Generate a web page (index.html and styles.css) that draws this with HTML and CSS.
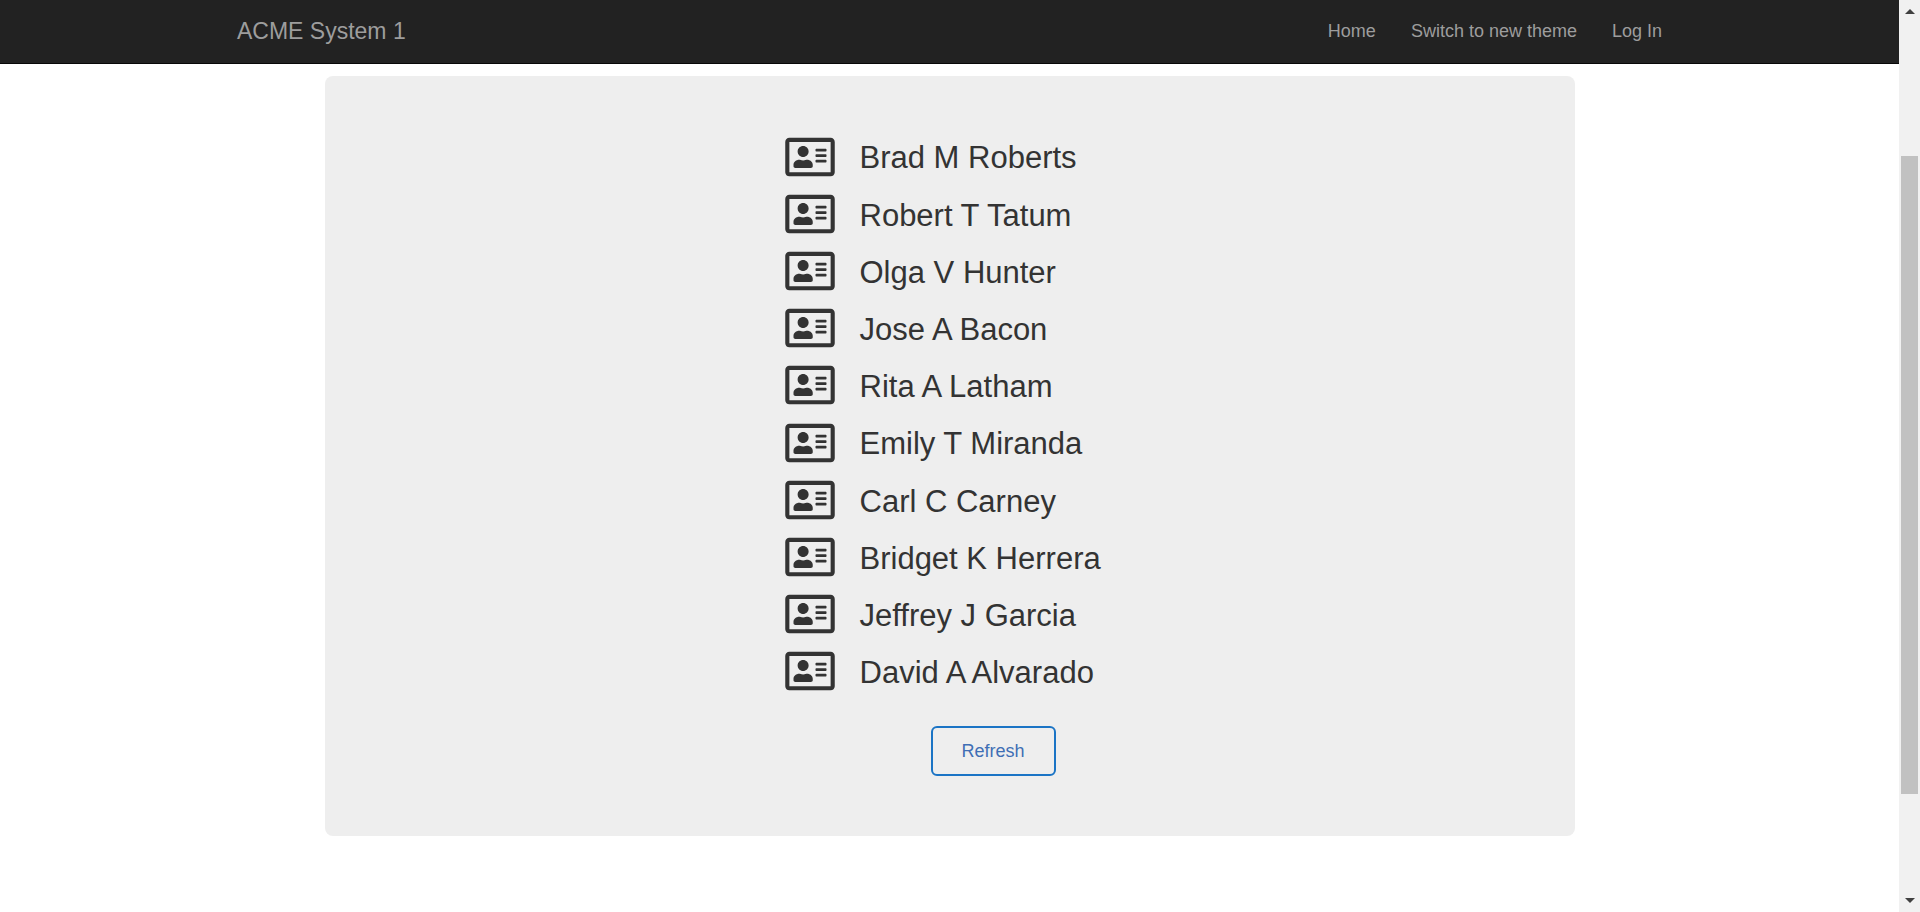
FILE: index.html
```html
<!DOCTYPE html>
<html lang="en">
<head>
<meta charset="utf-8">
<title>ACME System 1</title>
<link rel="stylesheet" href="styles.css">
</head>
<body>
<svg class="symbols" aria-hidden="true">
  <symbol id="address-card" viewBox="0 0 576 512">
    <path d="M528 32H48C21.500 32 0 53.500 0 80v352c0 26.500 21.500 48 48 48h480c26.500 0 48-21.500 48-48V80c0-26.500-21.500-48-48-48zm0 400H48V80h480v352zM208 256c35.300 0 64-28.700 64-64s-28.700-64-64-64-64 28.700-64 64 28.700 64 64 64zm-89.600 128h179.200c12.400 0 22.400-8.600 22.400-19.200v-19.200c0-31.800-30.100-57.600-67.200-57.600-10.800 0-18.700 8-44.800 8-26.900 0-33.400-8-44.800-8-37.100 0-67.200 25.800-67.200 57.600v19.200c0 10.600 10 19.200 22.400 19.200zM360 320h112c4.400 0 8-3.600 8-8v-16c0-4.400-3.600-8-8-8H360c-4.400 0-8 3.600-8 8v16c0 4.400 3.600 8 8 8zm0-64h112c4.400 0 8-3.600 8-8v-16c0-4.400-3.600-8-8-8H360c-4.400 0-8 3.600-8 8v16c0 4.400 3.600 8 8 8zm0-64h112c4.400 0 8-3.600 8-8v-16c0-4.400-3.600-8-8-8H360c-4.400 0-8 3.600-8 8v16c0 4.400 3.600 8 8 8z"/>
  </symbol>
</svg>
<div class="window">
  <div class="page">
    <header class="navbar">
      <div class="navbar-inner">
        <a class="brand" href="#">ACME System 1</a>
        <nav class="nav">
          <a href="#">Home</a>
          <a href="#">Switch to new theme</a>
          <a href="#">Log In</a>
        </nav>
      </div>
    </header>
    <main class="panel">
      <div class="directory">
        <ul class="people">
          <li><svg class="icon"><use href="#address-card"/></svg><span class="name">Brad M Roberts</span></li>
          <li><svg class="icon"><use href="#address-card"/></svg><span class="name">Robert T Tatum</span></li>
          <li><svg class="icon"><use href="#address-card"/></svg><span class="name">Olga V Hunter</span></li>
          <li><svg class="icon"><use href="#address-card"/></svg><span class="name">Jose A Bacon</span></li>
          <li><svg class="icon"><use href="#address-card"/></svg><span class="name">Rita A Latham</span></li>
          <li><svg class="icon"><use href="#address-card"/></svg><span class="name">Emily T Miranda</span></li>
          <li><svg class="icon"><use href="#address-card"/></svg><span class="name">Carl C Carney</span></li>
          <li><svg class="icon"><use href="#address-card"/></svg><span class="name">Bridget K Herrera</span></li>
          <li><svg class="icon"><use href="#address-card"/></svg><span class="name">Jeffrey J Garcia</span></li>
          <li><svg class="icon"><use href="#address-card"/></svg><span class="name">David A Alvarado</span></li>
        </ul>
        <button class="refresh" type="button">Refresh</button>
      </div>
    </main>
  </div>
  <div class="scrollbar" aria-hidden="true">
    <svg class="arrow" viewBox="0 0 10 5"><path d="M0 5L5 0L10 5Z"/></svg>
    <div class="track"><div class="thumb"></div></div>
    <svg class="arrow" viewBox="0 0 10 5"><path d="M0 0L5 5L10 0Z"/></svg>
  </div>
</div>
</body>
</html>
```
FILE: styles.css
```css
* {
  box-sizing: border-box;
}

body {
  margin: 0;
  background: #fff;
  color: #333;
  font: 18px/25px "Liberation Sans", Arial, sans-serif;
}

.symbols {
  display: none;
}

.window {
  display: flex;
  min-height: 100vh;
}

.page {
  flex: 1;
  min-width: 0;
}

.navbar {
  background: #222;
  border-bottom: 1px solid #080808;
}

.navbar-inner {
  display: flex;
  align-items: center;
  justify-content: space-between;
  max-width: 1463px;
  min-height: 63px;
  margin: 0 auto;
  padding: 0 19px;
}

.navbar a {
  color: #9d9d9d;
  text-decoration: none;
}

.brand {
  font-size: 23px;
}

.nav {
  display: flex;
  gap: 35px;
}

.panel {
  display: flex;
  justify-content: center;
  max-width: 1250px;
  margin: 12px auto 76px;
  padding: 52px 60px 60px;
  background: #eee;
  border-radius: 8px;
}

.directory {
  display: flex;
  flex-direction: column;
  width: 330px;
}

.people {
  margin: 0 0 26px;
  padding: 0;
  list-style: none;
  font-size: 40px;
  line-height: 1.43;
}

.people li {
  display: flex;
  align-items: center;
  gap: 25px;
}

.people li::after {
  content: "";
  height: 1.43em;
}

.icon {
  flex: none;
  width: 50px;
  height: 44px;
  fill: #333;
}

.name {
  padding-top: 4px;
  font-size: 31px;
  white-space: nowrap;
}

.refresh {
  align-self: flex-start;
  margin-left: 146px;
  padding: 11px 29px;
  background: transparent;
  border: 2px solid #1b74c5;
  border-radius: 6px;
  color: #3f6fb5;
  font: inherit;
  line-height: 24px;
}

.scrollbar {
  display: flex;
  flex-direction: column;
  align-items: center;
  width: 21px;
  padding: 9px 0;
  background: #f1f1f1;
}

.arrow {
  width: 10px;
  height: 5px;
  fill: #404040;
}

.track {
  display: flex;
  flex: 1;
  width: 17px;
  padding: 142px 0 104px;
}

.thumb {
  flex: 1;
  background: #c1c1c1;
}
```
